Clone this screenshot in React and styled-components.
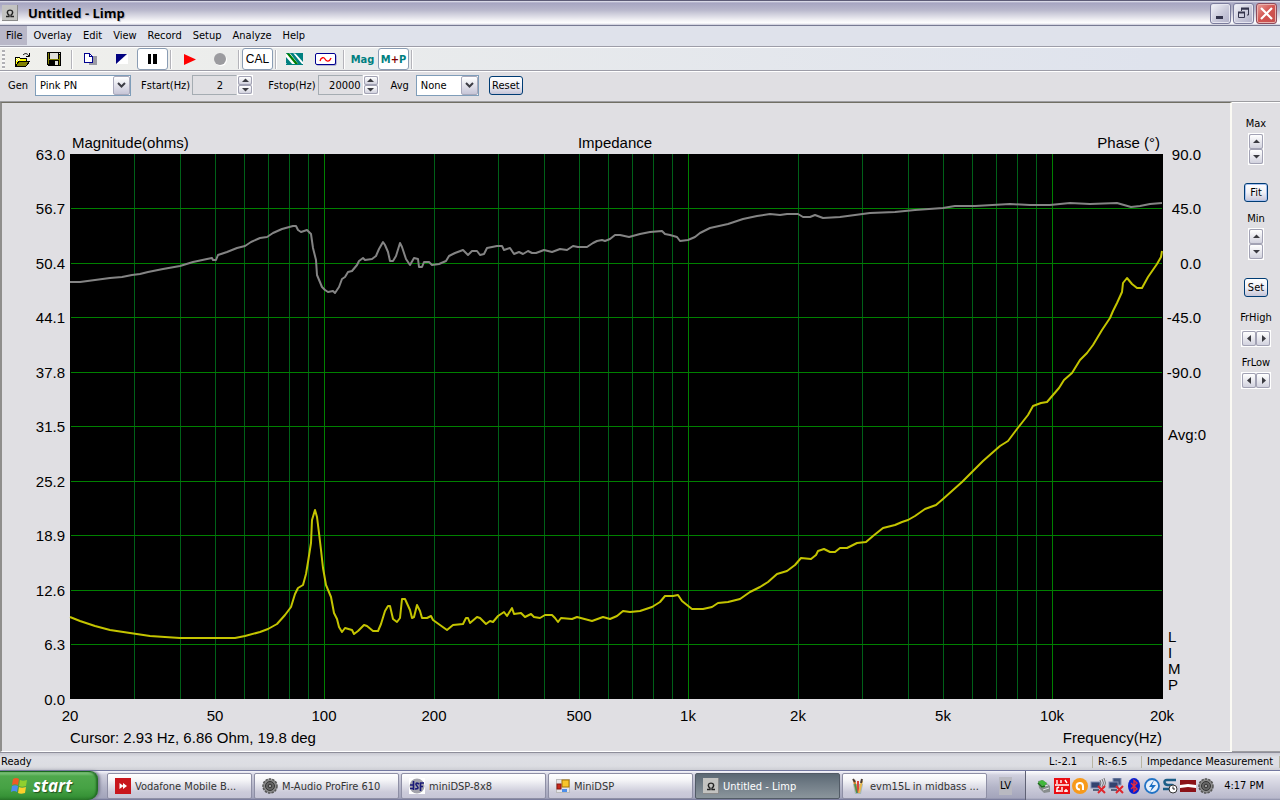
import React from 'react';
import styled, { createGlobalStyle, css } from 'styled-components';

const UI_FONT = '"DejaVu Sans Condensed", "DejaVu Sans", sans-serif';
const CHART_FONT = '"Liberation Sans", Arial, sans-serif';

const GlobalStyle = createGlobalStyle`
  * {
    box-sizing: border-box;
  }
  body {
    margin: 0;
    background: #e0dfe3;
    font-family: ${UI_FONT};
    font-size: 11px;
    color: #000;
  }
  button, input, select {
    margin: 0;
    padding: 0;
    border: 0;
    border-radius: 0;
    background: none;
    font: inherit;
    color: inherit;
  }
`;

const Window = styled.div`
  display: flex;
  flex-direction: column;
  min-height: 100vh;
`;

/* Title bar */

const TitleBar = styled.header`
  display: flex;
  align-items: center;
  height: 26px;
  padding: 0 3px 0 2px;
  border-top: 1px solid #5d5c77;
  border-bottom: 1px solid #777a93;
  background: linear-gradient(#e9e9f2 0, #a6a5c1 2px, #b9b8cc 9px, #f6f6f8 20px, #fff 22px, #c8c8d6 24px);
`;

const Title = styled.h1`
  flex: 1;
  margin: 0 0 0 10px;
  font-family: "Open Sans", sans-serif;
  font-size: 13px;
  line-height: 20px;
  font-weight: bold;
  text-shadow: 1px 1px 1px #b4b4c4;
`;

const CaptionButtons = styled.div`
  display: flex;
  gap: 2px;
`;

const CaptionButton = styled.button`
  display: grid;
  place-items: center;
  width: 21px;
  height: 21px;
  border: 1px solid ${(p) => (p.$close ? '#8d4b5d' : '#7b7c9c')};
  border-radius: 3px;
  background: ${(p) =>
    p.$close
      ? 'linear-gradient(135deg, #e9a09c, #d2534f 50%, #c4504f)'
      : 'linear-gradient(135deg, #f4f4fa, #c9c9da 55%, #b0b0c8)'};
  box-shadow: inset 0 0 0 1px ${(p) => (p.$close ? '#eab3ae' : '#e6e6f0')};
`;

/* Menu and tool bars */

const MenuBar = styled.nav`
  display: flex;
  height: 21px;
  border-bottom: 1px solid #9d9da8;
  background: #dfe2eb;
`;

const MenuItem = styled.button`
  height: 19px;
  padding: 0 5px 0 6px;
  line-height: 17px;
  background: ${(p) => (p.$active ? '#b9b8c8' : 'none')};
`;

const ToolBar = styled.div`
  display: flex;
  align-items: center;
  height: 24px;
  padding-left: 2px;
  border-top: 1px solid #fff;
  border-bottom: 1px solid #9d9da8;
  background: linear-gradient(90deg, #f0f0ec, #e9ebec 30%, #dfe3ed 90%);
`;

const Gripper = styled.span`
  width: 3px;
  height: 19px;
  margin-right: 2px;
  background: repeating-linear-gradient(#b0b0b4 0 2px, #f8f8f8 2px 4px);
`;

const Tool = styled.button`
  display: grid;
  place-items: center;
  width: 31px;
  height: 22px;
  border: 1px solid ${(p) => (p.$on ? '#8a9db4' : 'transparent')};
  border-radius: 3px;
  background: ${(p) => (p.$on ? '#fff' : 'none')};
  color: ${(p) => p.$color || '#000'};
  font-weight: ${(p) => (p.$bold ? 'bold' : 'normal')};
  ${(p) =>
    p.$plain &&
    css`
      font-family: "Liberation Sans", sans-serif;
      font-size: 12px;
    `}
`;

const Plus = styled.span`
  color: #800000;
`;

const ToolSeparator = styled.span`
  width: 2px;
  height: 19px;
  margin: 0 2px;
  border-left: 1px solid #b4b4ba;
  border-right: 1px solid #fff;
`;

const Settings = styled.div`
  display: flex;
  align-items: center;
  height: 30px;
  padding: 0 8px 3px;
  border-top: 1px solid #fff;
`;

const Field = styled.div`
  display: flex;
  align-items: center;
  margin-right: ${(p) => p.$gap}px;

  label {
    margin-right: ${(p) => p.$labelGap}px;
  }
`;

const SelectBox = styled.span`
  position: relative;
  display: inline-flex;
  width: ${(p) => p.$width}px;
  height: 21px;
  border: 1px solid #7f9db9;
  background: #fff;

  select {
    flex: 1;
    min-width: 0;
    padding-left: 4px;
    appearance: none;
    outline: none;
  }
`;

const SelectArrow = styled.span`
  position: absolute;
  top: 0;
  right: 0;
  display: grid;
  place-items: center;
  width: 17px;
  height: 19px;
  border: 1px solid #a9a9bb;
  border-radius: 2px;
  background: linear-gradient(#fff, #c6c5d7);
  pointer-events: none;
`;

const NumberInput = styled.input`
  width: 45px;
  height: 20px;
  padding-right: ${(p) => p.$inset}px;
  border: 1px solid #a5acb2;
  border-right-color: #e0dfe3;
  text-align: right;
`;

const SpinGroup = styled.span`
  display: inline-flex;
  flex-direction: ${(p) => (p.$horizontal ? 'row' : 'column')};
  border: 1px solid #fff;
`;

const SpinButton = styled.button`
  display: grid;
  place-items: center;
  width: 14px;
  height: ${(p) => (p.$tall ? 15 : 9)}px;
  border: 1px solid #a2a2b4;
  border-radius: 2px;
  background: linear-gradient(#fff, #d2d2de);
`;

const PushButton = styled.button`
  width: ${(p) => p.$width}px;
  height: 19px;
  border: 1px solid #003c74;
  border-radius: 3px;
  background: linear-gradient(#fff, #f0f0f6 50%, #c6c5d7);
  box-shadow: ${(p) => (p.$default ? 'inset 0 0 0 1px #a9c2f0' : 'none')};
  line-height: 15px;
`;

/* Work area */

const WorkArea = styled.main`
  display: flex;
  flex: 1;
  min-height: 0;
  border-top: 1px solid #9d9da1;
`;

const ChartPane = styled.section`
  flex: 1;
  min-width: 0;
  border: 1px solid #716f64;
  border-right: 2px solid #fbfaf4;
  border-bottom-color: #fff;
  border-left: 2px solid #8f8e8c;

  svg {
    display: block;
    width: 100%;
    height: 100%;
  }
`;

const ChartText = styled.text`
  font-family: ${CHART_FONT};
  font-size: 15px;
`;

const SidePane = styled.aside`
  display: flex;
  flex-direction: column;
  align-items: center;
  width: 48px;
  padding-top: 14px;
  border-top: 1px solid #fff;
  border-bottom: 1px solid #9d9da1;
`;

const SideGroup = styled.div`
  display: flex;
  flex-direction: column;
  align-items: center;
  margin-bottom: ${(p) => p.$below}px;

  span:first-child {
    margin-bottom: ${(p) => p.$labelGap}px;
    line-height: 14px;
  }

  > button {
    margin-top: 18px;
  }
`;

const StatusBar = styled.footer`
  display: flex;
  align-items: center;
  height: 18px;
  border-top: 1px solid #8e8e9a;
  background: linear-gradient(#c9c9d2, #dedfe5 4px, #dcdde2 13px, #cdced4);
  line-height: 16px;
`;

const StatusMessage = styled.span`
  flex: 1;
  padding-left: 1px;
`;

const StatusCell = styled.span`
  width: ${(p) => p.$width}px;
  padding-left: 5px;
  border-right: 1px solid #b8b5a2;
  line-height: 12px;
  white-space: nowrap;
`;

/* Task bar */

const TaskBar = styled.div`
  display: flex;
  height: 30px;
  border-top: 1px solid #7378a0;
  background: linear-gradient(#f6f6fb, #d0d0de 4px, #b4b5c8 16px, #a3a4bb 27px, #6f7294 29px);
`;

const StartButton = styled.button`
  display: flex;
  align-items: center;
  gap: 5px;
  width: 98px;
  padding: 0 0 1px 10px;
  border-top: 1px solid #17691c;
  border-radius: 0 8px 10px 0;
  background: linear-gradient(#8fd08a, #4fa84c 4px, #46a244 16px, #379337 24px, #2a7a2b);
  box-shadow: inset -2px 0 2px #226a24, 2px 0 3px #77788f;
  color: #fff;
  font: italic bold 17px "Open Sans", sans-serif;
  text-shadow: 1px 1px 1px #20531f;
`;

const Tasks = styled.div`
  display: flex;
  flex: 1;
  gap: 2px;
  min-width: 0;
  padding: 2px 0 1px 9px;
`;

const TaskButton = styled.button`
  display: flex;
  align-items: center;
  gap: 4px;
  flex: 0 1 145px;
  min-width: 0;
  padding: 0 7px;
  border: 1px solid ${(p) => (p.$active ? '#525b66' : '#8e8fa5')};
  border-radius: 2px;
  background: ${(p) =>
    p.$active
      ? 'linear-gradient(#5b6873, #707c86 10px, #8b959c)'
      : 'linear-gradient(#fff, #f5f5f8 6px, #cccbda 18px, #c6c5d6)'};
  color: ${(p) => (p.$active ? '#fff' : '#333')};
  white-space: nowrap;

  svg {
    flex: none;
  }
`;

const Language = styled.span`
  align-self: center;
  margin: 0 13px 0 9px;
  padding: 3px 1px;
  background: #b9b9c1;
  line-height: 12px;
`;

const Tray = styled.div`
  display: flex;
  align-items: center;
  gap: 2px;
  padding: 0 16px 0 10px;
  border-left: 1px solid #5f6174;
  background: linear-gradient(#fff, #e3e3ec 5px, #c9c9d8 18px, #b9b9cc 27px, #8c8ea8);
`;

const Clock = styled.time`
  margin-left: 8px;
`;

/* Icons */

function Icon({ w = 16, h = 16, children }) {
  return (
    <svg width={w} height={h} viewBox={`0 0 ${w} ${h}`} aria-hidden="true">
      {children}
    </svg>
  );
}

function OmegaIcon() {
  return (
    <Icon>
      <rect width="16" height="16" fill="#8a8a8a" />
      <rect width="15" height="15" fill="#c3c3c1" />
      <path
        d="M4 11.500h3V10C5.500 9 5 8 5.500 6.500 6 4.600 10 4.600 10.500 6.500 11 8 10.500 9 9 10v1.500h3"
        fill="none"
        stroke="#222"
        strokeWidth="1.400"
      />
    </Icon>
  );
}

function OpenIcon() {
  return (
    <Icon w={17} h={15}>
      <g shapeRendering="crispEdges">
        <path d="M1 5h4l1 1h6v3H6l-4 5H1z" fill="#ff0" stroke="#000" />
        <path d="M2 6h1v1H2zM4 6h1v1H4zM3 7h1v1H3zM5 7h1v1H5zM2 8h1v1H2zM4 8h1v1H4z" fill="#fff" />
        <path d="M5 9h11l-4 5H2z" fill="#808000" stroke="#000" />
      </g>
      <path d="M9 3c2-2 4-2 6 1M15.500 1v3.500H12" fill="none" stroke="#000" />
    </Icon>
  );
}

function SaveIcon() {
  return (
    <Icon w={14} h={14}>
      <g shapeRendering="crispEdges">
        <path d="M0 0h14v14H1L0 13z" fill="#000" />
        <path d="M1 1h1v11H1zM12 3h1v10h-1zM2 7h10v1H2z" fill="#808000" />
        <path d="M3 1h8v6H3z" fill="#e0e0dc" />
        <path d="M8 9h3v4H8zM12 1h1v1h-1z" fill="#e0e0dc" />
      </g>
    </Icon>
  );
}

function CopyIcon() {
  return (
    <Icon w={14} h={13}>
      <g shapeRendering="crispEdges">
        <path d="M8 3h5v9H5v-2h3z" fill="#9a9aa4" />
        <path d="M0.500 0.500h5l3 3v6h-8z" fill="#fff" stroke="#000090" />
        <path d="M5.500 0.500v3h3" fill="none" stroke="#000090" />
      </g>
    </Icon>
  );
}

function ContrastIcon() {
  return (
    <Icon w={12} h={10}>
      <path d="M12 0v10H0z" fill="#fff" />
      <path d="M0 0h11L0 10z" fill="#000080" />
    </Icon>
  );
}

function HatchIcon() {
  return (
    <Icon w={17} h={12}>
      <rect width="17" height="12" fill="#fff" />
      <path d="M0 4l7 8H2L0 10zM4 0h3l9 11-1 1h-2z" fill="#008080" />
      <path d="M0 0h3l10 12h-3z" fill="#008000" />
      <path d="M9 0h8v9z" fill="#008080" />
      <path d="M0 0h17M0 11.500h17" stroke="#008080" />
    </Icon>
  );
}

function SineIcon() {
  return (
    <Icon w={22} h={13}>
      <rect x="1.500" y="1.500" width="20" height="11" rx="1.500" fill="#8080b8" />
      <rect x="0.500" y="0.500" width="20" height="11" rx="1.500" fill="#fff" stroke="#000090" />
      <path d="M5 8c1-4 4-4 5-2s4 4 6-1" fill="none" stroke="#f00" strokeWidth="1.300" />
    </Icon>
  );
}

const ARROWS = {
  up: 'M0 4h7L3.500 0.500z',
  down: 'M0 1h7L3.500 4.500z',
  left: 'M5 0v7L1 3.500z',
  right: 'M2 0v7l4-3.500z',
};

function Arrow({ dir }) {
  const vertical = dir === 'up' || dir === 'down';
  return (
    <Icon w={7} h={vertical ? 5 : 7}>
      <path d={ARROWS[dir]} fill="#3a3a40" />
    </Icon>
  );
}

function WindowsFlag() {
  return (
    <Icon w={18} h={17}>
      <path d="M3 2c2-1.500 4-1.500 6 0L8 8C6 7 4 7 2 8z" fill="#ee5a26" />
      <path d="M10 3c2 1 4 1 7 0l-1 6c-3 1-5 1-7 0z" fill="#8fd02f" />
      <path d="M2 9c2-1 4-1 6 0l-1 6c-2-1.500-4-1.500-6 0z" fill="#4d8df0" />
      <path d="M9 10c2 1 4 1 7 0l-1 6c-3 1-5 1-7 0z" fill="#fbd02b" />
    </Icon>
  );
}

function VodafoneIcon() {
  return (
    <Icon>
      <rect width="16" height="16" fill="#c8151c" />
      <path d="M4.500 5l4 3-4 3zM8 5l4 3-4 3z" fill="#fff" />
    </Icon>
  );
}

function SpeakerIcon() {
  return (
    <Icon>
      <circle cx="8" cy="8" r="7" fill="#8c8c8c" stroke="#555" strokeWidth="1.500" strokeDasharray="2.500 1" />
      <circle cx="8" cy="8" r="4.500" fill="#666" stroke="#333" />
      <circle cx="8" cy="8" r="1.800" fill="#999" stroke="#333" />
    </Icon>
  );
}

function DspIcon() {
  return (
    <Icon>
      <rect width="16" height="16" fill="#fff" />
      <circle cx="8" cy="8" r="7.500" fill="#a3a3ab" />
      <path
        d="M4.500 3v9M1 10.500h3M1 7h3M10 6c-3-2-4 0-2 2s1 3-2 3M11.500 13V4.500M11 5h4M11 8.500h3"
        fill="none"
        stroke="#1a1a78"
        strokeWidth="1.600"
      />
    </Icon>
  );
}

function FormsIcon() {
  return (
    <Icon w={14} h={14}>
      <rect x="0.500" y="0.500" width="13" height="13" fill="#e4e4e8" stroke="#bbb" />
      <rect x="6" y="1" width="7" height="7" fill="#f7c52c" stroke="#a87400" />
      <rect x="1" y="5" width="4" height="5" fill="#c8281c" stroke="#8a150f" />
      <rect x="6" y="10" width="5" height="3" fill="#4d8eea" />
    </Icon>
  );
}

function PaintIcon() {
  return (
    <Icon>
      <path d="M3 6l2 10h6l2-10z" fill="#a5b8c0" />
      <path d="M4 2l3 12" stroke="#d8862c" strokeWidth="2.500" />
      <path d="M8 3v12" stroke="#d9463c" strokeWidth="2" />
      <path d="M12 3l-3 12" stroke="#e8b84a" strokeWidth="2" />
      <path d="M5 6l2 9" stroke="#3f9858" strokeWidth="1.500" />
      <path d="M3 1l2 3M12 1l-1 4" stroke="#4a3c34" strokeWidth="2" />
    </Icon>
  );
}

function NetworkOffIcon({ wireless }) {
  return (
    <Icon>
      {!wireless && <rect x="5" y="0" width="8" height="7" fill="#41547d" stroke="#8592b5" />}
      <rect x="1" y="4" width="9" height="6" fill="#33436f" stroke="#8390b4" />
      <path d="M3 12h6" stroke="#59647f" strokeWidth="2" />
      {wireless && <path d="M10 2q2 3 0 6M12 1q3 4 0 8M14 0q3 5 0 10" fill="none" stroke="#777" />}
      <path d="M8 8l7 7M15 8l-7 7" stroke="#e0262c" strokeWidth="2" />
    </Icon>
  );
}

function TrayIcons() {
  return (
    <>
      <Icon>
        <path d="M2 3l5-1 7 6v6l-6 1-5-5z" fill="#888d8d" />
        <path d="M2 4l4-2 5 3-3 4z" fill="#42b83c" />
        <path d="M6 9l6-2M7 12l6-2" stroke="#e0e4e4" />
        <path d="M2 5l4 4 3-1" stroke="#176f16" fill="none" strokeWidth="1.500" />
      </Icon>
      <Icon>
        <rect width="16" height="16" fill="#ea0d12" />
        <path d="M1 7h14M3 2v4M3 14v-4l2-1M7 2v3M8 14V9M11 2l2 3M12 14v-3M14 13h-4M2 13h5" stroke="#fff" strokeWidth="1.400" fill="none" />
      </Icon>
      <Icon>
        <circle cx="8" cy="8" r="8" fill="#f79a1b" />
        <path d="M11 12V8a3.200 3.200 0 1 0-3 3.500" fill="none" stroke="#fff" strokeWidth="2" />
      </Icon>
      <NetworkOffIcon wireless />
      <NetworkOffIcon />
      <Icon>
        <ellipse cx="8" cy="8" rx="6" ry="8" fill="#0a1fd0" />
        <path d="M5 5l6 6-3 2.500v-11L11 5l-6 6" fill="none" stroke="#e32c3e" strokeWidth="1.400" />
      </Icon>
      <Icon>
        <circle cx="8" cy="8" r="7" fill="#e6f0fb" stroke="#2273c4" strokeWidth="1.800" />
        <path d="M10 2L5 9h3l-2 5 6-7H8z" fill="#1a6fc4" />
      </Icon>
      <Icon>
        <path d="M14 2H5C1 2 2 7 6 7h4c3 1 2 4-1 4H1" fill="none" stroke="#1c5e86" strokeWidth="2.500" />
        <circle cx="11" cy="11" r="4" fill="#fff" stroke="#333" />
        <path d="M11 8.500V11h2" fill="none" stroke="#222" />
      </Icon>
      <Icon>
        <rect y="2" width="16" height="12" fill="#8b1218" />
        <path d="M0 7l8-1 8 1v3l-8-1-8 1z" fill="#fff" />
      </Icon>
      <SpeakerIcon />
    </>
  );
}

/* Chart */

const PLOT = { left: 70, top: 154, width: 1092, height: 545 };

const MINOR_FREQS = [30, 40, 50, 60, 70, 80, 90, 200, 300, 400, 500, 600, 700, 800, 900,
  2000, 3000, 4000, 5000, 6000, 7000, 8000, 9000];
const MAJOR_FREQS = [100, 1000, 10000];
const FREQ_LABELS = [
  [20, '20'], [50, '50'], [100, '100'], [200, '200'], [500, '500'],
  [1000, '1k'], [2000, '2k'], [5000, '5k'], [10000, '10k'], [20000, '20k'],
];
const OHM_LABELS = ['63.0', '56.7', '50.4', '44.1', '37.8', '31.5', '25.2', '18.9', '12.6', '6.3', '0.0'];
const PHASE_LABELS = ['90.0', '45.0', '0.0', '-45.0', '-90.0'];

const PHASE_LINE = `70,282 80,282 95,280 110,278 122,277 132,275 140,274 148,272 163,269 180,266
  193,262 207,259 212,258 213,260 216,260 218,255 227,252 237,248 245,246 251,242 260,238 267,237
  273,233 282,229 293,226 296,226 298,230 301,232 307,230 311,234 313,248 316,260 317,275 322,287
  325,290 328,292 333,291 335,293 337,290 339,287 342,279 345,277 348,272 352,271 357,265 359,261
  363,258 365,260 372,259 376,256 379,249 383,242 385,245 388,252 390,261 393,261 396,256 400,243
  402,247 406,259 410,265 414,258 418,259 419,267 422,267 424,262 429,262 432,265 439,264 446,261
  449,256 455,253 463,250 468,255 472,251 477,251 480,255 484,254 487,248 497,246 502,246 504,250
  510,248 514,254 519,252 523,254 528,251 532,253 536,253 544,250 552,252 560,249 567,250 573,246
  578,247 587,247 593,243 597,241 602,240 605,241 610,239 615,235 620,235 629,237 640,234 650,232
  662,231 665,234 670,235 677,237 680,241 688,240 695,237 700,233 710,228 728,224 743,219 757,216
  770,214 780,215 787,214 798,214 803,217 810,217 815,215 823,218 840,217 870,213 895,212 915,210
  943,208 955,206 975,206 1010,204 1030,205 1050,205 1070,203 1090,204 1117,203 1124,205 1131,207
  1140,206 1150,204 1162,203`;

const MAGNITUDE_LINE = `70,617 80,621 95,626 110,630 130,633 150,636 180,638 210,638 235,638
  245,636 260,632 268,629 277,624 285,615 291,607 295,594 298,588 303,585 306,574 308,562 311,543
  312,520 315,510 317,517 319,533 321,550 323,568 326,585 331,597 334,613 337,619 339,627 342,632
  345,628 352,630 354,634 358,631 364,625 367,626 373,631 378,631 381,624 385,611 388,606 390,606
  393,619 397,622 400,618 402,599 405,599 410,610 412,618 414,617 417,605 420,611 422,618 427,618
  431,616 433,620 440,625 447,630 453,625 463,624 466,618 468,618 470,623 477,617 480,618 486,624
  490,621 493,622 498,616 504,612 507,616 512,608 514,614 521,613 525,617 531,614 534,617 540,618
  545,615 552,615 555,618 558,622 561,618 572,619 577,617 592,621 603,617 610,619 617,616 623,611
  630,612 640,611 652,607 660,602 665,596 673,596 678,595 682,601 692,609 703,609 712,607 718,603
  728,602 740,599 750,592 760,587 768,582 777,574 787,571 795,565 801,558 811,559 816,555 818,551
  824,549 830,552 835,552 840,548 847,548 857,543 866,542 873,536 883,528 895,525 902,522 908,520
  915,516 925,509 936,505 943,499 962,482 972,472 983,461 1000,446 1008,441 1017,429 1028,415
  1033,406 1041,403 1047,402 1059,388 1064,380 1072,373 1080,360 1087,353 1093,345 1102,330
  1110,318 1113,311 1117,303 1122,292 1123,283 1127,278 1132,284 1137,288 1142,288 1148,277
  1157,264 1161,257 1162,251`;

const freqX = (f) => Math.round(PLOT.left + (PLOT.width * Math.log10(f / 20)) / 3);
const rowY = (i) => Math.floor(PLOT.top + (PLOT.height * i) / 10);

function ImpedanceChart() {
  const bottom = PLOT.top + PLOT.height;
  const right = PLOT.left + PLOT.width;

  return (
    <svg viewBox="2 103 1228 648" role="img" aria-label="Impedance">
      <rect x={PLOT.left} y={PLOT.top} width={PLOT.width + 1} height={PLOT.height} fill="#000" />
      <g shapeRendering="crispEdges">
        {MINOR_FREQS.map((f) => (
          <path key={f} d={`M${freqX(f) + 0.5} ${PLOT.top}V${bottom}`} stroke="#006018" />
        ))}
        {OHM_LABELS.slice(1, 10).map((label, i) => (
          <path key={label} d={`M${PLOT.left + 1} ${rowY(i + 1) + 0.5}H${right}`} stroke="#008000" />
        ))}
        {MAJOR_FREQS.map((f) => (
          <path key={f} d={`M${freqX(f) + 0.5} ${PLOT.top}V${bottom}`} stroke="#008000" />
        ))}
      </g>
      <g fill="none" strokeWidth="2" strokeLinejoin="round">
        <polyline points={PHASE_LINE} stroke="#848484" />
        <polyline points={MAGNITUDE_LINE} stroke="#c4c400" />
      </g>

      <ChartText x="72" y="148">Magnitude(ohms)</ChartText>
      <ChartText x="615" y="148" textAnchor="middle">Impedance</ChartText>
      <ChartText x="1160" y="148" textAnchor="end">Phase (°)</ChartText>

      {OHM_LABELS.map((label, i) => (
        <ChartText key={label} x="65" y={rowY(i) + 6} textAnchor="end">{label}</ChartText>
      ))}
      {PHASE_LABELS.map((label, i) => (
        <ChartText key={label} x="1201" y={rowY(i) + 6} textAnchor="end">{label}</ChartText>
      ))}
      {FREQ_LABELS.map(([f, label]) => (
        <ChartText key={f} x={freqX(f)} y="721" textAnchor="middle">{label}</ChartText>
      ))}

      <ChartText x="1168" y="440">Avg:0</ChartText>
      {'LIMP'.split('').map((letter, i) => (
        <ChartText key={letter} x="1168" y={642 + i * 16}>{letter}</ChartText>
      ))}
      <ChartText x="70" y="743">Cursor: 2.93 Hz, 6.86 Ohm, 19.8 deg</ChartText>
      <ChartText x="1162" y="743" textAnchor="end">Frequency(Hz)</ChartText>
    </svg>
  );
}

/* Controls */

function Dropdown({ id, value, width }) {
  return (
    <SelectBox $width={width}>
      <select id={id} defaultValue={value}>
        <option>{value}</option>
      </select>
      <SelectArrow>
        <Icon w={9} h={6}>
          <path d="M1 1l3.500 3.500L8 1" fill="none" stroke="#3c3c44" strokeWidth="2" />
        </Icon>
      </SelectArrow>
    </SelectBox>
  );
}

function Spinner({ label, horizontal, tall }) {
  const [first, second] = horizontal ? ['left', 'right'] : ['up', 'down'];
  return (
    <SpinGroup $horizontal={horizontal}>
      <SpinButton type="button" $tall={tall} aria-label={`${label} ${first}`}>
        <Arrow dir={first} />
      </SpinButton>
      <SpinButton type="button" $tall={tall} aria-label={`${label} ${second}`}>
        <Arrow dir={second} />
      </SpinButton>
    </SpinGroup>
  );
}

const MENUS = ['File', 'Overlay', 'Edit', 'View', 'Record', 'Setup', 'Analyze', 'Help'];

const TASKS = [
  { title: 'Vodafone Mobile B...', icon: <VodafoneIcon /> },
  { title: 'M-Audio ProFire 610', icon: <SpeakerIcon /> },
  { title: 'miniDSP-8x8', icon: <DspIcon /> },
  { title: 'MiniDSP', icon: <FormsIcon /> },
  { title: 'Untitled - Limp', icon: <OmegaIcon />, active: true },
  { title: 'evm15L in midbass ...', icon: <PaintIcon /> },
];

export default function App() {
  return (
    <Window>
      <GlobalStyle />

      <TitleBar>
        <OmegaIcon />
        <Title>Untitled - Limp</Title>
        <CaptionButtons>
          <CaptionButton type="button" aria-label="Minimize">
            <Icon w={13} h={13}><path d="M2 9h7v3H2z" fill="#34344c" /></Icon>
          </CaptionButton>
          <CaptionButton type="button" aria-label="Restore">
            <Icon w={13} h={13}>
              <path d="M4.500 4V2h7v6H10" fill="none" stroke="#34344c" />
              <path d="M4 1.500h8" stroke="#34344c" strokeWidth="2" />
              <path d="M1.500 5.500h6v5h-6z" fill="none" stroke="#34344c" />
              <path d="M1 5.500h7" stroke="#34344c" strokeWidth="2" />
            </Icon>
          </CaptionButton>
          <CaptionButton type="button" aria-label="Close" $close>
            <Icon w={13} h={13}><path d="M1 1l11 11M12 1L1 12" stroke="#fff" strokeWidth="2.200" /></Icon>
          </CaptionButton>
        </CaptionButtons>
      </TitleBar>

      <MenuBar>
        {MENUS.map((name) => (
          <MenuItem key={name} type="button" $active={name === 'File'}>{name}</MenuItem>
        ))}
      </MenuBar>

      <ToolBar>
        <Gripper />
        <Tool type="button" aria-label="Open"><OpenIcon /></Tool>
        <Tool type="button" aria-label="Save"><SaveIcon /></Tool>
        <ToolSeparator />
        <Tool type="button" aria-label="Copy"><CopyIcon /></Tool>
        <Tool type="button" aria-label="Background"><ContrastIcon /></Tool>
        <Tool type="button" aria-label="Pause" $on>
          <Icon w={11} h={10}><path d="M1 0h3v10H1zM6 0h4v10H6z" fill="#000" /></Icon>
        </Tool>
        <ToolSeparator />
        <Tool type="button" aria-label="Record">
          <Icon w={12} h={11}><path d="M0 0l12 5.500L0 11z" fill="#f00" /></Icon>
        </Tool>
        <Tool type="button" aria-label="Stop">
          <Icon w={13} h={13}>
            <circle cx="7" cy="7" r="6" fill="#fff" />
            <circle cx="6" cy="6" r="6" fill="#9b9b9f" />
          </Icon>
        </Tool>
        <ToolSeparator />
        <Tool type="button" $on $plain>CAL</Tool>
        <ToolSeparator />
        <Tool type="button" aria-label="Overlay"><HatchIcon /></Tool>
        <Tool type="button" aria-label="Generator"><SineIcon /></Tool>
        <ToolSeparator />
        <Tool type="button" $bold $color="#008080">Mag</Tool>
        <Tool type="button" $on $bold $color="#008080">
          <span>M<Plus>+</Plus>P</span>
        </Tool>
        <ToolSeparator />
      </ToolBar>

      <Settings>
        <Field $gap={10} $labelGap={7}>
          <label htmlFor="gen">Gen</label>
          <Dropdown id="gen" value="Pink PN" width={96} />
        </Field>
        <Field $gap={15} $labelGap={2}>
          <label htmlFor="fstart">Fstart(Hz)</label>
          <NumberInput id="fstart" defaultValue="2" $inset={13} />
          <Spinner label="Fstart" />
        </Field>
        <Field $gap={12} $labelGap={2}>
          <label htmlFor="fstop">Fstop(Hz)</label>
          <NumberInput id="fstop" defaultValue="20000" $inset={1} />
          <Spinner label="Fstop" />
        </Field>
        <Field $gap={10} $labelGap={7}>
          <label htmlFor="avg">Avg</label>
          <Dropdown id="avg" value="None" width={63} />
        </Field>
        <PushButton type="button" $width={34}>Reset</PushButton>
      </Settings>

      <WorkArea>
        <ChartPane>
          <ImpedanceChart />
        </ChartPane>
        <SidePane>
          <SideGroup $labelGap={2} $below={10}>
            <span>Max</span>
            <Spinner label="Max" tall />
            <PushButton type="button" $width={24} $default>Fit</PushButton>
          </SideGroup>
          <SideGroup $labelGap={2} $below={14}>
            <span>Min</span>
            <Spinner label="Min" tall />
            <PushButton type="button" $width={24}>Set</PushButton>
          </SideGroup>
          <SideGroup $labelGap={5} $below={9}>
            <span>FrHigh</span>
            <Spinner label="FrHigh" horizontal tall />
          </SideGroup>
          <SideGroup $labelGap={2} $below={0}>
            <span>FrLow</span>
            <Spinner label="FrLow" horizontal tall />
          </SideGroup>
        </SidePane>
      </WorkArea>

      <StatusBar>
        <StatusMessage>Ready</StatusMessage>
        <StatusCell $width={49}>L:-2.1</StatusCell>
        <StatusCell $width={49}>R:-6.5</StatusCell>
        <StatusCell $width={138}>Impedance Measurement</StatusCell>
      </StatusBar>

      <TaskBar>
        <StartButton type="button"><WindowsFlag />start</StartButton>
        <Tasks>
          {TASKS.map((task) => (
            <TaskButton key={task.title} type="button" $active={task.active}>
              {task.icon}
              {task.title}
            </TaskButton>
          ))}
        </Tasks>
        <Language>LV</Language>
        <Tray>
          <TrayIcons />
          <Clock>4:17 PM</Clock>
        </Tray>
      </TaskBar>
    </Window>
  );
}
